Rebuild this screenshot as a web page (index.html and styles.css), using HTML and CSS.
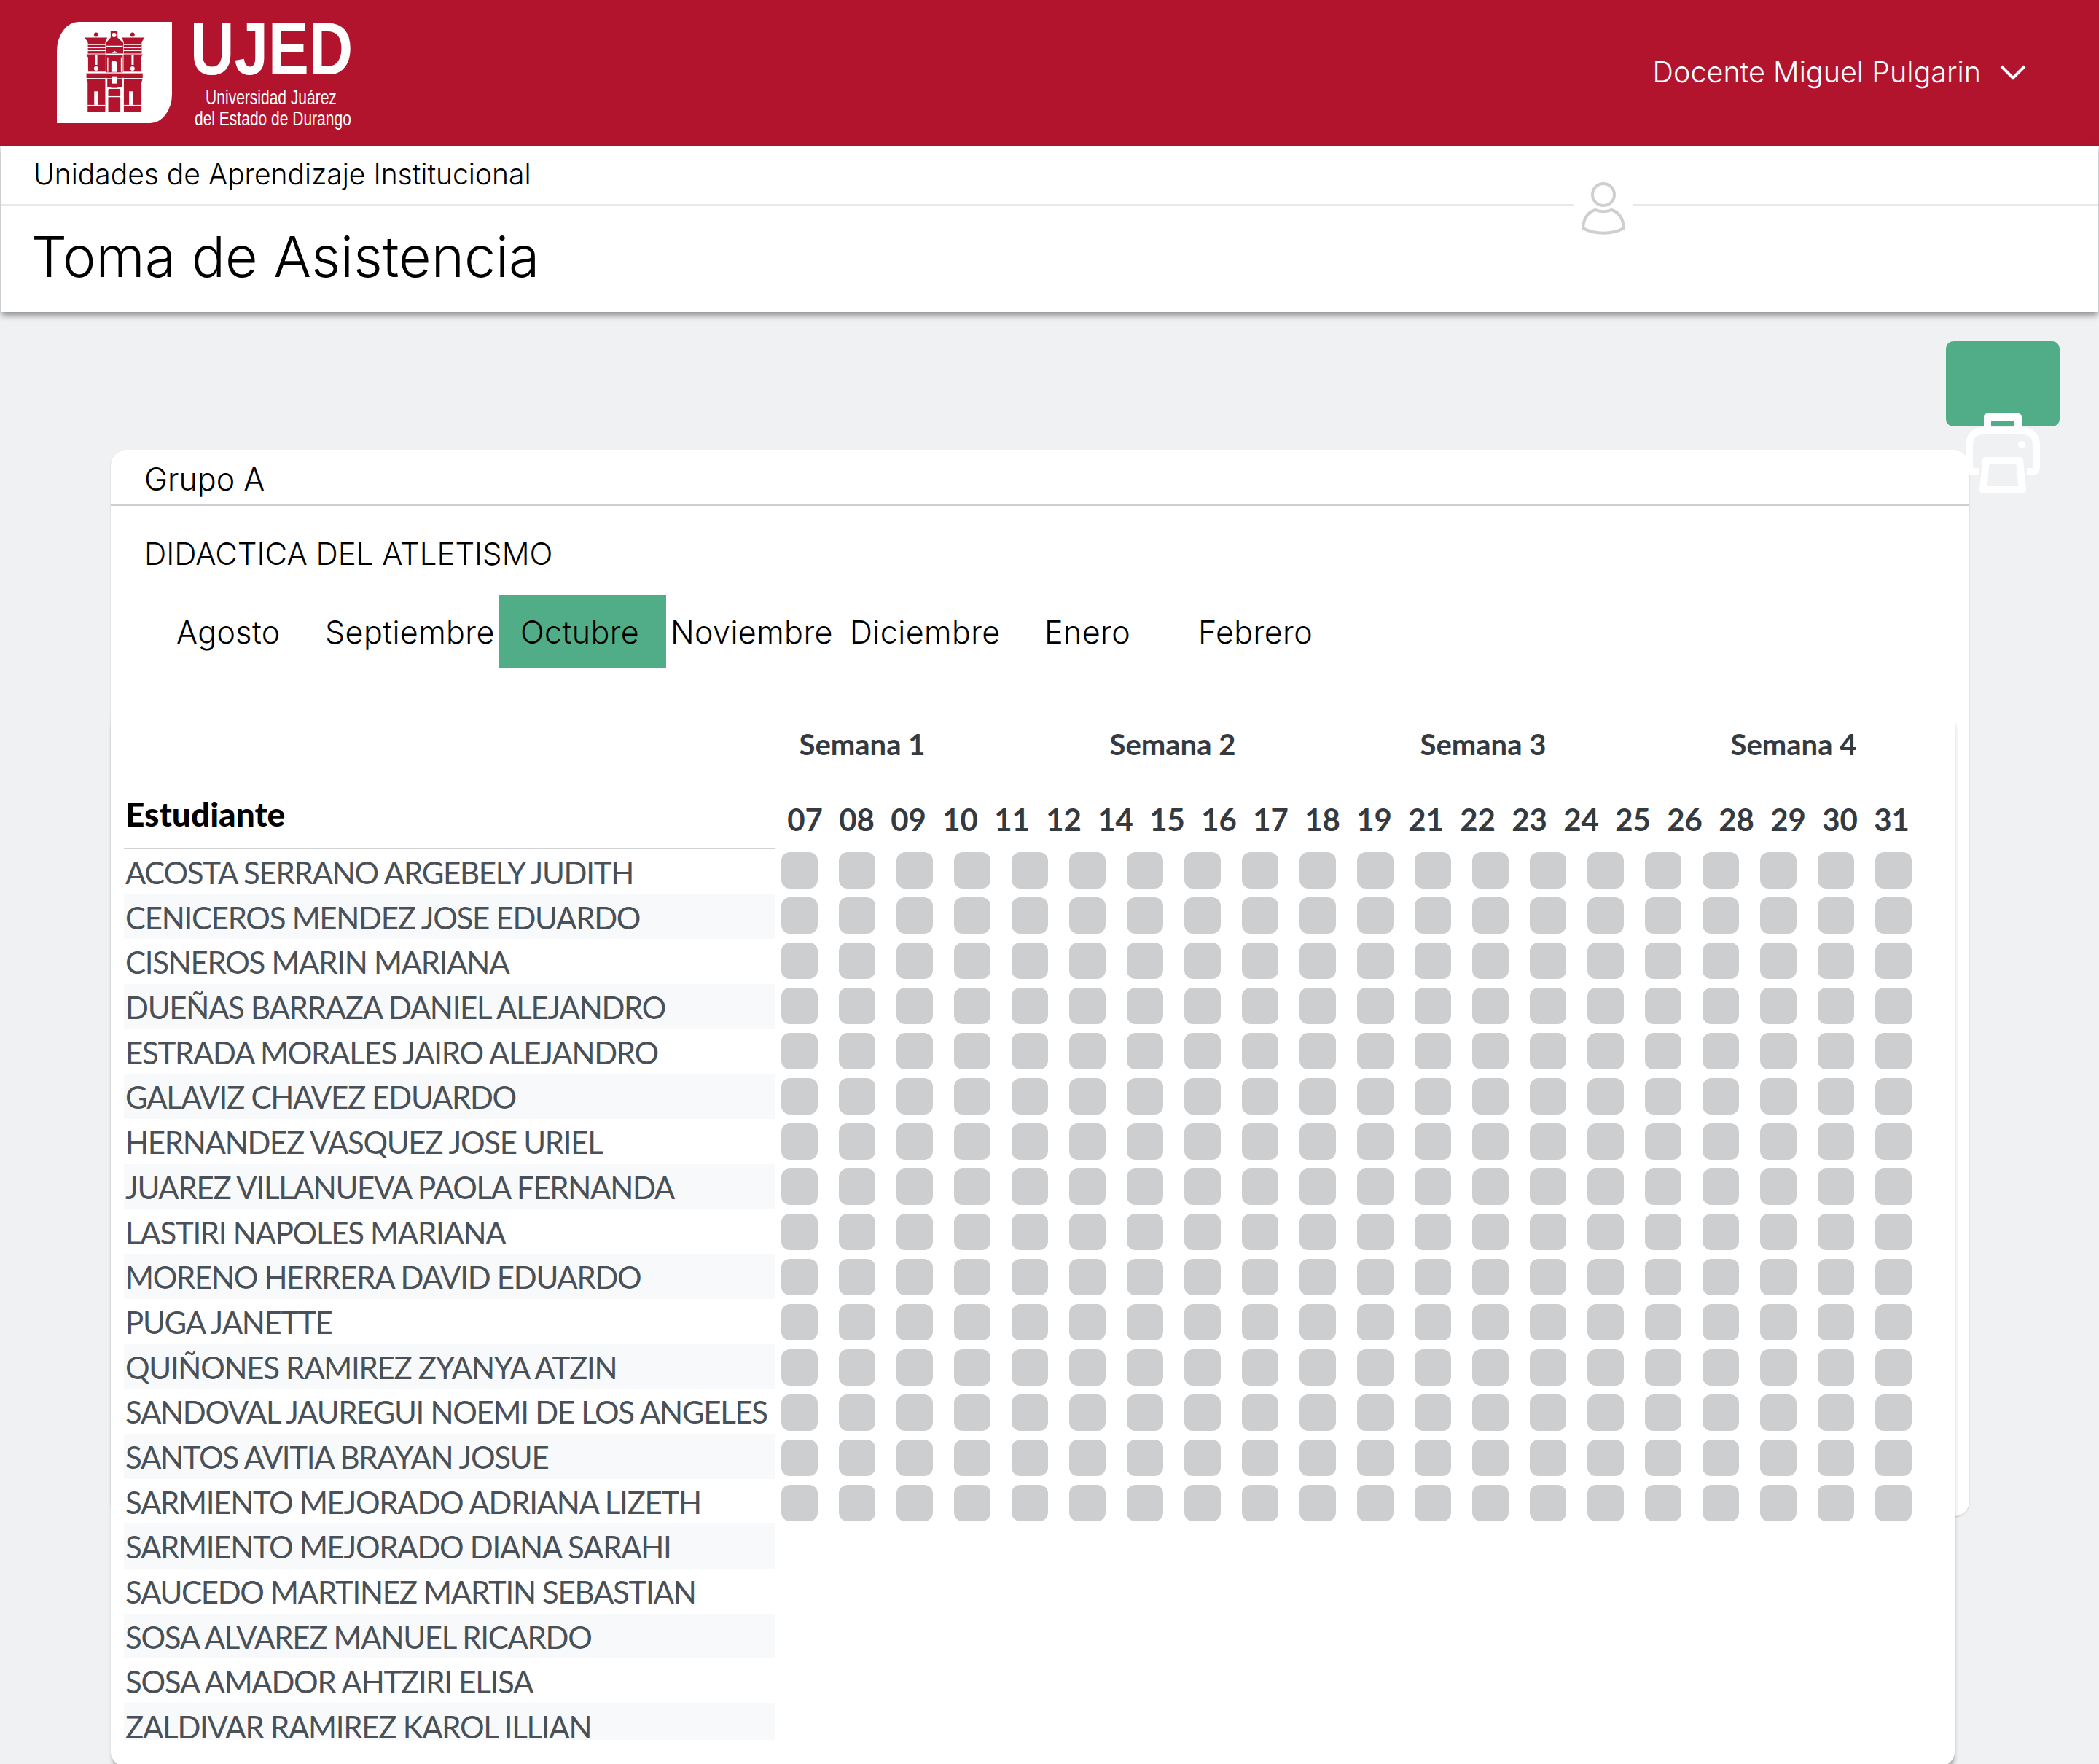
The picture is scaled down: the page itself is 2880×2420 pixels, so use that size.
FILE: index.html
```html
<!DOCTYPE html>
<html lang="es">
<head>
  <meta charset="UTF-8" />
  <meta name="viewport" content="width=device-width, initial-scale=1.0"/>
  <title>Toma de Asistencia</title>
  <link rel="stylesheet" href="styles.css">
</head>
<body>
  <header class="topbar">
    <div class="logo">
      <div class="logo-shield">
        <svg viewBox="54 30 475 420" width="158" height="140">
          <g fill="#b2142d">
            <circle cx="216" cy="82" r="9"/>
            <circle cx="366" cy="82" r="9"/>
            <path d="M168 94h94l-8 18v48h-72v-48z"/>
            <path d="M322 94h94l-12 18v48h-74v-48z"/>
            <path d="M276 66h28v28l24 22v44h-72v-44l20-22z"/>
            <path d="M176 163h79v72h-72v-58z"/>
            <path d="M408 163h-79v72h72v-58z"/>
            <path d="M258 168h68v92h-68z"/>
            <rect x="176" y="240" width="232" height="22"/>
            <path d="M176 265h79v136h-74v-122z"/>
            <path d="M408 265h-79v136h74v-122z"/>
            <path d="M266 310q24-24 50 0v92h-50z"/>
            <path d="M262 266h60v34h-60z"/>
          </g>
          <g fill="#fff">
            <circle cx="290" cy="84" r="9"/>
            <rect x="180" y="121" width="76" height="4"/>
            <rect x="180" y="134" width="76" height="4"/>
            <rect x="180" y="146" width="76" height="4"/>
            <rect x="328" y="121" width="76" height="4"/>
            <rect x="328" y="134" width="76" height="4"/>
            <rect x="328" y="146" width="76" height="4"/>
            <rect x="258" y="128" width="68" height="4"/>
            <path d="M282 158l10-10 10 10z"/>
            <rect x="212" y="165" width="9" height="42"/>
            <rect x="362" y="165" width="9" height="42"/>
            <circle cx="216" cy="222" r="9"/>
            <circle cx="366" cy="222" r="9"/>
            <rect x="262" y="176" width="4" height="60"/>
            <rect x="318" y="176" width="4" height="60"/>
            <path d="M279 236v-40q11-16 22 0v40z"/>
            <rect x="176" y="238" width="232" height="4"/>
            <rect x="176" y="262" width="84" height="4"/>
            <rect x="324" y="262" width="84" height="4"/>
            <rect x="254" y="260" width="4" height="142"/>
            <rect x="326" y="260" width="4" height="142"/>
            <rect x="262" y="302" width="60" height="4"/>
            <rect x="280" y="254" width="22" height="30"/>
            <rect x="208" y="316" width="16" height="56"/>
            <rect x="352" y="316" width="16" height="56"/>
            <rect x="181" y="372" width="72" height="4"/>
            <rect x="331" y="372" width="72" height="4"/>
            <rect x="262" y="336" width="60" height="4"/>
          </g>
        </svg>
      </div>
      <div class="logo-words">
        <div class="logo-name">UJED</div>
        <div class="logo-sub">Universidad Juárez<br>del Estado de Durango</div>
      </div>
    </div>
    <div class="user-menu">
      <span>Docente Miguel Pulgarin</span>
      <svg class="chevron" viewBox="0 0 36 22" width="36" height="22"><path d="M2 3l16 16L34 3" fill="none" stroke="#fff" stroke-width="4"/></svg>
    </div>
  </header>

  <section class="subheader">
    <div class="breadcrumb">Unidades de Aprendizaje Institucional</div>
    <h1>Toma de Asistencia</h1>
    <div class="user-badge">
      <svg viewBox="0 0 62 72" width="62" height="72">
        <g fill="none" stroke="#cfcfcf" stroke-width="4">
          <ellipse cx="31" cy="17" rx="15" ry="15"/>
          <path d="M20 38c6 3 16 3 22 0 10 3 16 10 17 25-16 9-40 9-56 0 1-15 7-22 17-25z" stroke-linejoin="round"/>
        </g>
      </svg>
    </div>
  </section>

  <main class="content">
    <div class="print-row">
      <button class="print-btn">
        <svg class="printer" viewBox="0 0 102 110" width="102" height="110">
          <g fill="none" stroke="#fff" stroke-width="10" stroke-linejoin="round">
            <path d="M30 24V5h42v19"/>
            <path d="M18 80H10Q5 80 5 74V44Q5 24 26 24h50q21 0 21 20v30q0 6-5 6h-8"/>
            <path d="M24 105l4-40h46l4 40z"/>
          </g>
          <circle cx="77" cy="43" r="5" fill="#fff"/>
        </svg>
      </button>
    </div>

    <div class="card">
      <div class="card-title">Grupo A</div>
      <div class="course">DIDACTICA DEL ATLETISMO</div>
      <nav class="months">
        <a>Agosto</a>
        <a>Septiembre</a>
        <a class="active">Octubre</a>
        <a>Noviembre</a>
        <a>Diciembre</a>
        <a>Enero</a>
        <a>Febrero</a>
      </nav>

      <div class="sheet">
        <div class="weeks">
          <span>Semana 1</span><span>Semana 2</span><span>Semana 3</span><span>Semana 4</span>
        </div>
        <div class="head-row">
          <div class="head-name">Estudiante</div>
          <div class="days">
            <span>07</span><span>08</span><span>09</span><span>10</span><span>11</span><span>12</span><span>14</span><span>15</span><span>16</span><span>17</span><span>18</span><span>19</span><span>21</span><span>22</span><span>23</span><span>24</span><span>25</span><span>26</span><span>28</span><span>29</span><span>30</span><span>31</span>
          </div>
        </div>
        <div class="body-row">
          <ul class="names">
            <li>ACOSTA SERRANO ARGEBELY JUDITH</li>
            <li>CENICEROS MENDEZ JOSE EDUARDO</li>
            <li>CISNEROS MARIN MARIANA</li>
            <li>DUEÑAS BARRAZA DANIEL ALEJANDRO</li>
            <li>ESTRADA MORALES JAIRO ALEJANDRO</li>
            <li>GALAVIZ CHAVEZ EDUARDO</li>
            <li>HERNANDEZ VASQUEZ JOSE URIEL</li>
            <li>JUAREZ VILLANUEVA PAOLA FERNANDA</li>
            <li>LASTIRI NAPOLES MARIANA</li>
            <li>MORENO HERRERA DAVID EDUARDO</li>
            <li>PUGA JANETTE</li>
            <li>QUIÑONES RAMIREZ ZYANYA ATZIN</li>
            <li>SANDOVAL JAUREGUI NOEMI DE LOS ANGELES</li>
            <li>SANTOS AVITIA BRAYAN JOSUE</li>
            <li>SARMIENTO MEJORADO ADRIANA LIZETH</li>
            <li>SARMIENTO MEJORADO DIANA SARAHI</li>
            <li>SAUCEDO MARTINEZ MARTIN SEBASTIAN</li>
            <li>SOSA ALVAREZ MANUEL RICARDO</li>
            <li>SOSA AMADOR AHTZIRI ELISA</li>
            <li>ZALDIVAR RAMIREZ KAROL ILLIAN</li>
          </ul>
          <div class="cells">
            <i></i><i></i><i></i><i></i><i></i><i></i><i></i><i></i><i></i><i></i><i></i><i></i><i></i><i></i><i></i><i></i><i></i><i></i><i></i><i></i>
            <i></i><i></i><i></i><i></i><i></i><i></i><i></i><i></i><i></i><i></i><i></i><i></i><i></i><i></i><i></i><i></i><i></i><i></i><i></i><i></i>
            <i></i><i></i><i></i><i></i><i></i><i></i><i></i><i></i><i></i><i></i><i></i><i></i><i></i><i></i><i></i><i></i><i></i><i></i><i></i><i></i>
            <i></i><i></i><i></i><i></i><i></i><i></i><i></i><i></i><i></i><i></i><i></i><i></i><i></i><i></i><i></i><i></i><i></i><i></i><i></i><i></i>
            <i></i><i></i><i></i><i></i><i></i><i></i><i></i><i></i><i></i><i></i><i></i><i></i><i></i><i></i><i></i><i></i><i></i><i></i><i></i><i></i>
            <i></i><i></i><i></i><i></i><i></i><i></i><i></i><i></i><i></i><i></i><i></i><i></i><i></i><i></i><i></i><i></i><i></i><i></i><i></i><i></i>
            <i></i><i></i><i></i><i></i><i></i><i></i><i></i><i></i><i></i><i></i><i></i><i></i><i></i><i></i><i></i><i></i><i></i><i></i><i></i><i></i>
            <i></i><i></i><i></i><i></i><i></i><i></i><i></i><i></i><i></i><i></i><i></i><i></i><i></i><i></i><i></i><i></i><i></i><i></i><i></i><i></i>
            <i></i><i></i><i></i><i></i><i></i><i></i><i></i><i></i><i></i><i></i><i></i><i></i><i></i><i></i><i></i><i></i><i></i><i></i><i></i><i></i>
            <i></i><i></i><i></i><i></i><i></i><i></i><i></i><i></i><i></i><i></i><i></i><i></i><i></i><i></i><i></i><i></i><i></i><i></i><i></i><i></i>
            <i></i><i></i><i></i><i></i><i></i><i></i><i></i><i></i><i></i><i></i><i></i><i></i><i></i><i></i><i></i><i></i><i></i><i></i><i></i><i></i>
            <i></i><i></i><i></i><i></i><i></i><i></i><i></i><i></i><i></i><i></i><i></i><i></i><i></i><i></i><i></i><i></i><i></i><i></i><i></i><i></i>
            <i></i><i></i><i></i><i></i><i></i><i></i><i></i><i></i><i></i><i></i><i></i><i></i><i></i><i></i><i></i><i></i><i></i><i></i><i></i><i></i>
            <i></i><i></i><i></i><i></i><i></i><i></i><i></i><i></i><i></i><i></i><i></i><i></i><i></i><i></i><i></i><i></i><i></i><i></i><i></i><i></i>
            <i></i><i></i><i></i><i></i><i></i><i></i><i></i><i></i><i></i><i></i><i></i><i></i><i></i><i></i><i></i><i></i><i></i><i></i><i></i><i></i>
          </div>
        </div>
      </div>
    </div>
  </main>
</body>
</html>
```

FILE: styles.css
```css
* {
  box-sizing: border-box;
}
html, body {
  height: 2420px;
  overflow: hidden;
}
body {
  margin: 0;
  background-color: #f0f1f3;
  font-family: Inter, "Open Sans", sans-serif;
  color: #000;
}

/* barra superior */
.topbar {
  height: 200px;
  background-color: #b2142d;
  display: flex;
  justify-content: space-between;
  padding: 30px 100px 0 78px;
  color: #fff;
}
.logo {
  display: flex;
  gap: 25px;
  height: 139px;
}
.logo-shield {
  width: 158px;
  height: 139px;
  background: #fff;
  border-radius: 30px 0 30px 0 / 40px 0 40px 0;
}
.logo-shield svg {
  display: block;
}
.logo-words {
  width: 220px;
  font-family: "Liberation Sans", sans-serif;
}
.logo-name {
  width: 272px;
  font-size: 102px;
  font-weight: 700;
  line-height: 74px;
  white-space: nowrap;
  transform: scaleX(0.82);
  transform-origin: left;
}
.logo-sub {
  width: 280px;
  margin: 15px 0 0 6px;
  font-size: 28px;
  line-height: 29px;
  text-align: center;
  white-space: nowrap;
  transform: scaleX(0.75);
  transform-origin: left;
}
.user-menu {
  display: flex;
  align-items: center;
  gap: 26px;
  height: 138px;
  font-size: 39.5px;
  font-weight: 300;
}

/* encabezado de pagina */
.subheader {
  position: relative;
  margin: 0 2px;
  height: 228px;
  background: #fff;
  box-shadow: 0 5px 8px rgba(0,0,0,0.4);
}
.breadcrumb {
  height: 82px;
  padding: 15px 0 0 44px;
  font-size: 39px;
  font-weight: 300;
  border-bottom: 2px solid #e8e8e8;
}
h1 {
  margin: 0;
  padding: 24px 0 0 41px;
  font-size: 77px;
  font-weight: 300;
  line-height: 92px;
}
.user-badge {
  position: absolute;
  left: 2158px;
  top: 50px;
  width: 80px;
  display: flex;
  justify-content: center;
  background: #fff;
}

/* contenido */
.content {
  padding: 39px 0 0 152px;
}
.print-row {
  width: 2674px;
  display: flex;
  justify-content: flex-end;
}
.print-btn {
  position: relative;
  width: 156px;
  height: 117px;
  margin-top: 1px;
  padding: 0;
  border: none;
  border-radius: 10px;
  background-color: #51ad87;
}
.printer {
  position: absolute;
  left: 27px;
  top: 99px;
  z-index: 2;
}
.card {
  width: 2550px;
  height: 1462px;
  margin-top: 33px;
  background: #fff;
  border-radius: 20px;
  box-shadow: 0 1px 2px rgba(0,0,0,0.2);
}
.card-title {
  height: 76px;
  padding: 13px 0 0 46px;
  font-size: 43px;
  font-weight: 300;
  border-bottom: 2px solid #cfcfcf;
}
.course {
  padding: 43px 0 0 46px;
  font-size: 42px;
  font-weight: 300;
  line-height: 46px;
}
.months {
  display: grid;
  grid-template-columns: 204px 244px 230px 246px 267px 211px auto;
  height: 100px;
  margin: 33px 0 0 84px;
  font-size: 43px;
  font-weight: 300;
  letter-spacing: 0.4px;
}
.months a {
  display: flex;
  align-items: center;
  padding: 2px 0 0 6px;
}
.months a.active {
  padding-left: 30px;
  background-color: #51ad87;
}

/* planilla */
.sheet {
  width: 2530px;
  height: 1450px;
  margin-top: 57px;
  padding: 0 0 0 18px;
  background: #fff;
  border-radius: 20px;
  box-shadow: 1px 8px 6px -2px rgba(0,0,0,0.35);
  position: relative;
  font-family: Lato, sans-serif;
  color: #343a40;
}
.weeks {
  display: flex;
  padding: 20px 0 0 800px;
  height: 96px;
  font-size: 40px;
  font-weight: 700;
}
.weeks span {
  width: 426px;
  text-align: center;
  line-height: 56px;
}
.head-row {
  display: flex;
  height: 96px;
}
.head-name {
  width: 894px;
  padding: 0 0 0 2px;
  font-size: 46px;
  font-weight: 900;
  color: #000;
  line-height: 96px;
  border-bottom: 2px solid #d2d2d2;
}
.days {
  display: flex;
  padding: 0 0 0 5px;
  font-size: 42px;
  font-weight: 700;
  line-height: 111px;
}
.days span {
  width: 71px;
  text-align: center;
}
.body-row {
  display: flex;
}
.names {
  width: 894px;
  margin: 0;
  padding: 0;
  list-style: none;
  font-size: 42px;
  color: #495057;
  letter-spacing: -1.3px;
}
.names li {
  height: 61.7px;
  line-height: 64px;
  padding-left: 2px;
  white-space: nowrap;
}
.names li:nth-child(even) {
  background-color: #f8f9fa;
}
.names li:last-child {
  height: 50px;
}
.cells {
  display: grid;
  grid-template-columns: repeat(20, 50px);
  grid-auto-rows: 50px;
  gap: 12px 29px;
  margin: 4px 0 0 8px;
  height: 918px;
}
.cells i {
  display: block;
  border-radius: 12px;
  background-color: #cdced0;
}
```
